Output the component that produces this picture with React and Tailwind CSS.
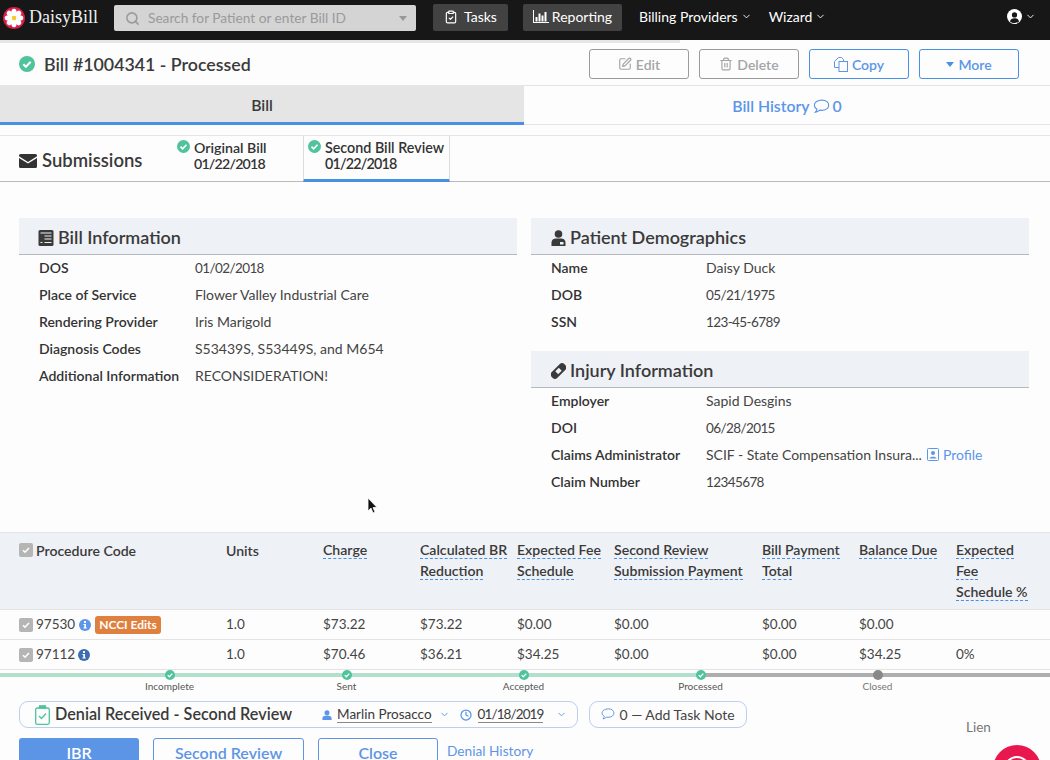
import React from "react";
import { ChevronDown, Search, ClipboardCheck, SquarePen, Trash2, Clock } from "lucide-react";

const CheckDot = ({ size = 13, className = "" }) => (
  <svg width={size} height={size} viewBox="0 0 16 16" className={`shrink-0 ${className}`}>
    <circle cx="8" cy="8" r="8" fill="#4fc39b" />
    <path d="M4.3 8.2l2.6 2.6 4.8-5" fill="none" stroke="#fff" strokeWidth="2" />
  </svg>
);

const Flower = () => (
  <svg width="22" height="22" viewBox="0 0 22 22">
    <circle cx="11" cy="11" r="11" fill="#d81f4a" />
    {[0, 45, 90, 135, 180, 225, 270, 315].map((a) => (
      <ellipse key={a} cx="11" cy="5.4" rx="2.7" ry="3.7" fill="#fff" transform={`rotate(${a} 11 11)`} />
    ))}
    <circle cx="11" cy="11" r="2.2" fill="#f6cf1d" />
  </svg>
);

const Bubble = ({ size = 15 }) => (
  <svg width={size} height={size * 0.87} viewBox="0 0 16 14" className="shrink-0">
    <path d="M8.500 1C4.400 1 1.200 3.100 1.200 5.900c0 1.500 1 2.800 2.500 3.700-.2 1-.7 2-1.500 2.900 1.500-.2 3-.9 4.100-1.900.5.100 1.100.1 1.700.1 4.100 0 6.800-2.100 6.800-4.800S12.600 1 8.500 1z" fill="none" stroke="#5b96e8" strokeWidth="1.100" />
  </svg>
);

const Box = () => (
  <span className="w-[14px] h-[14px] rounded-[2px] bg-[#b5b5b5] flex items-center justify-center shrink-0">
    <svg width="10" height="10" viewBox="0 0 10 10">
      <path d="M2 5.2l2 2 4-4.200" fill="none" stroke="#fff" strokeWidth="1.600" />
    </svg>
  </span>
);

const InfoDot = ({ color }) => (
  <svg width="12" height="12" viewBox="0 0 12 12" className="shrink-0">
    <circle cx="6" cy="6" r="6" fill={color} />
    <rect x="5" y="2" width="2" height="2" fill="#fff" />
    <path d="M4.400 5h2.600v3.400h.8v1H4.400v-1h.9V6h-.9z" fill="#fff" />
  </svg>
);

const PersonFill = ({ size = 12, color = "#5b96e8" }) => (
  <svg width={size} height={size} viewBox="0 0 12 12" className="shrink-0">
    <circle cx="6" cy="3.200" r="3" fill={color} />
    <path d="M.5 12V9.500C.5 7.500 2.500 6.500 6 6.500s5.500 1 5.500 3V12z" fill={color} />
  </svg>
);

const Row = ({ label, value, children, w, tight }) => (
  <div className="flex h-[27px] items-center text-[14px]">
    <div className={`${w} shrink-0 font-semibold text-[#333]`}>{label}</div>
    <div className={`text-[#444] flex items-center ${tight ? "pt-[1px] text-[13.5px] tracking-[-0.6px]" : ""}`}>{value}{children}</div>
  </div>
);

const SectionHead = ({ icon, title }) => (
  <div className="h-[37px] pt-[3px] bg-[#eef1f6] border-b border-[#b4b8bd] flex items-center pl-5 gap-[4px] text-[18px] font-semibold text-[#3a3a3a]">
    {icon}
    {title}
  </div>
);

const Dash = ({ children }) => <span className="border-b border-dashed border-[#4a90e2] leading-[16px] inline-block">{children}</span>;

const columns = [
  { w: "w-[97px]", lines: ["Charge"] },
  { w: "w-[97px]", lines: ["Calculated BR", "Reduction"] },
  { w: "w-[97px]", lines: ["Expected Fee", "Schedule"] },
  { w: "w-[148px]", lines: ["Second Review", "Submission Payment"] },
  { w: "w-[97px]", lines: ["Bill Payment", "Total"] },
  { w: "w-[97px]", lines: ["Balance Due"] },
  { w: "w-[90px]", lines: ["Expected", "Fee", "Schedule %"] },
];

const steps = [
  { name: "Incomplete", done: true },
  { name: "Sent", done: true },
  { name: "Accepted", done: true },
  { name: "Processed", done: true },
  { name: "Closed", done: false },
];

const BtnOutline = ({ children, blue }) => (
  <button className={`w-[100px] h-[30px] rounded-[3px] border flex items-center justify-center gap-1 text-[14px] font-semibold ${blue ? "border-[#4a90e2] text-[#5b96e8]" : "border-[#9a9a9a] text-[#a5a5a5]"}`}>
    {children}
  </button>
);

export default function App() {
  return (
    <div className="relative w-[1050px] h-[760px] overflow-hidden bg-[#fdfdfd] font-['Lato',sans-serif] text-[#333]">
      {/* top nav */}
      <div className="h-10 pt-[4px] bg-[#171717] flex items-start text-white text-[14px]">
        <div className="w-[114px] h-[27px] flex items-center pl-[3px] gap-[4px] font-['Liberation_Serif',serif] text-[18px] text-[#eee]">
          <Flower />
          <span className="pb-[1px]">DaisyBill</span>
        </div>
        <div className="w-[302px] h-[26px] mt-[1px] rounded-[2px] bg-[#d4d4d4] flex items-center pl-[11px] pr-[9px] text-[#9a9a9a] text-[13.7px]">
          <Search size={15} strokeWidth={2.5} className="mr-[8px]" />
          <span className="flex-1">Search for Patient or enter Bill ID</span>
          <span className="w-0 h-0 border-x-[4px] border-x-transparent border-t-[5px] border-t-[#999]"></span>
        </div>
        <div className="ml-[17px] w-[75px] h-[27px] pb-[2px] rounded-[2px] bg-[#424242] flex items-center justify-center gap-[6px]">
          <ClipboardCheck size={14} />
          Tasks
        </div>
        <div className="ml-[15px] w-[99px] h-[27px] pb-[2px] rounded-[2px] bg-[#424242] flex items-center justify-center gap-[3px]">
          <svg width="16" height="13" viewBox="0 0 16 13" fill="#fff">
            <path d="M0 0h1v12h15v1H0z" />
            <rect x="2.500" y="7" width="2" height="4.500" />
            <rect x="5.500" y="3.500" width="2" height="8" />
            <rect x="8.500" y="5.500" width="2" height="6" />
            <rect x="11.500" y="2" width="2" height="9.500" />
          </svg>
          Reporting
        </div>
        <div className="ml-[17px] h-[27px] pb-[2px] flex items-center gap-[3px]">Billing Providers <ChevronDown size={11} /></div>
        <div className="ml-[17px] h-[27px] pb-[2px] flex items-center gap-[3px]">Wizard <ChevronDown size={11} /></div>
        <div className="ml-auto mr-[14px] h-[27px] pb-[2px] flex items-center gap-[3px]">
          <svg width="15" height="15" viewBox="0 0 16 16">
            <circle cx="8" cy="8" r="8" fill="#fff" />
            <circle cx="8" cy="6.300" r="2.800" fill="#171717" />
            <path d="M3.200 13.200c.5-2.300 2.300-3.400 4.800-3.400s4.300 1.100 4.800 3.400A6.600 6.600 0 018 14.800a6.600 6.600 0 01-4.800-1.600z" fill="#171717" />
          </svg>
          <ChevronDown size={11} />
        </div>
      </div>
      <div className="h-[3px] w-[680px] bg-[#e6e6e6]"></div>

      {/* bill title */}
      <div className="h-[42px] flex items-center pl-[19px] pr-[31px]">
        <CheckDot size={16} />
        <div className="ml-[9px] pt-[1px] text-[17.8px] font-semibold text-[#3a3a3a]">Bill #1004341 - Processed</div>
        <div className="ml-auto flex gap-[10px]">
          <BtnOutline><SquarePen size={14} /> Edit</BtnOutline>
          <BtnOutline><Trash2 size={14} /> Delete</BtnOutline>
          <BtnOutline blue>
            <svg width="14" height="15" viewBox="0 0 14 15" fill="none" stroke="#5b96e8" strokeWidth="1">
              <path d="M4.500 .5h3l2 2v2.500M4.500 .5L.5 4.500v6h4.500" />
              <rect x="5" y="4.500" width="8.500" height="10" />
            </svg>
            Copy
          </BtnOutline>
          <BtnOutline blue>
            <span className="w-0 h-0 border-x-[4px] border-x-transparent border-t-[5px] border-t-[#4a90e2]"></span> More
          </BtnOutline>
        </div>
      </div>

      {/* tabs */}
      <div className="flex h-[40px] border-t border-[#e5e5e5] text-[15.8px] font-semibold">
        <div className="w-[524px] pt-[2px] bg-[#e5e5e5] border-b-[3px] border-[#4a90e2] flex items-center justify-center text-[#3a3a3a]">Bill</div>
        <div className="flex-1 pt-[2px] border-b border-[#e5e5e5] flex items-center justify-center gap-[3px] text-[#5b96e8]">
          Bill History <Bubble size={17} /> 0
        </div>
      </div>

      {/* submissions */}
      <div className="mt-[10px] h-[47px] flex border-y border-t-[#e5e5e5] border-b-[#b9b9b9]">
        <div className="w-[171px] pl-[19px] pt-[4px] flex items-center gap-[5px] text-[18.5px] font-semibold text-[#3a3a3a]">
          <svg width="18" height="14" viewBox="0 0 18 14" className="shrink-0">
            <path d="M1.500 0h15A1.500 1.500 0 0118 1.500v.8L9 8 0 2.300v-.8A1.500 1.500 0 011.500 0zM0 4l9 5.600L18 4v8.500a1.500 1.500 0 01-1.500 1.500h-15A1.500 1.500 0 010 12.500z" fill="#333" />
          </svg>
          Submissions
        </div>
        <div className="w-[132px] pl-[6px] pt-[4px] flex items-start gap-[4px] text-[14.2px] font-semibold leading-[16px]">
          <CheckDot size={13} />
          <div>Original Bill<br /><span className="tracking-[-0.8px]">01/22/2018</span></div>
        </div>
        <div className="w-[147px] pl-[4px] pt-[4px] flex items-start gap-[4px] text-[14.3px] font-semibold leading-[16px] border-x border-[#dcdcdc] border-b-[3px] border-b-[#4a90e2] h-[46px]">
          <CheckDot size={13} />
          <div>Second Bill Review<br /><span className="tracking-[-0.8px]">01/22/2018</span></div>
        </div>
      </div>

      {/* info panels */}
      <div className="mt-[36px] h-[314px] px-[19px] flex gap-[14px]">
        <div className="w-[498px]">
          <SectionHead
            title="Bill Information"
            icon={
              <svg width="16" height="16" viewBox="0 0 15 16" className="-ml-[1px]">
                <rect width="15" height="16" rx="1.500" fill="#3a3a3a" />
                <path d="M2 3h11M6 6h7M6 9h7M2 12.500h2M6 12.500h7" stroke="#eef1f6" strokeWidth="1.200" />
              </svg>
            }
          />
          <div className="pl-5 -mt-[1px]">
            <Row w="w-[156px]" tight label="DOS" value="01/02/2018" />
            <Row w="w-[156px]" label="Place of Service" value="Flower Valley Industrial Care" />
            <Row w="w-[156px]" label="Rendering Provider" value="Iris Marigold" />
            <Row w="w-[156px]" label="Diagnosis Codes" value="S53439S, S53449S, and M654" />
            <Row w="w-[156px]" label="Additional Information" value="RECONSIDERATION!" />
          </div>
        </div>
        <div className="w-[498px]">
          <SectionHead
            title="Patient Demographics"
            icon={
              <svg width="15" height="16" viewBox="0 0 15 16">
                <circle cx="7.500" cy="4" r="3.800" fill="#3a3a3a" />
                <path d="M.5 16v-3.500C.5 10 2.500 8.500 5 8.500h5c2.500 0 4.500 1.500 4.500 4V16z" fill="#3a3a3a" />
                <rect x="9" y="12" width="3.500" height="2.500" fill="#eef1f6" />
              </svg>
            }
          />
          <div className="pl-5 -mt-[1px] pb-[16px]">
            <Row w="w-[155px]" label="Name" value="Daisy Duck" />
            <Row w="w-[155px]" tight label="DOB" value="05/21/1975" />
            <Row w="w-[155px]" tight label="SSN" value="123-45-6789" />
          </div>
          <SectionHead
            title="Injury Information"
            icon={
              <svg width="15" height="16" viewBox="0 0 15 16">
                <g transform="rotate(45 7.500 8)">
                  <rect x="3.500" y="-1" width="8" height="18" rx="3.500" fill="#3a3a3a" />
                  <rect x="5.500" y="5.500" width="4" height="5" fill="#eef1f6" />
                </g>
              </svg>
            }
          />
          <div className="pl-5 -mt-[1px]">
            <Row w="w-[155px]" label="Employer" value="Sapid Desgins" />
            <Row w="w-[155px]" tight label="DOI" value="06/28/2015" />
            <Row w="w-[155px]" label="Claims Administrator" value="SCIF - State Compensation Insura...">
              <span className="ml-[5px] flex items-center gap-[4px] text-[#5b96e8]">
                <svg width="12" height="13" viewBox="0 0 12 13">
                  <rect x=".5" y=".5" width="11" height="12" rx="1" fill="none" stroke="#5b96e8" />
                  <circle cx="6" cy="5" r="2" fill="#5b96e8" />
                  <path d="M2.500 10.500c0-2.500 7-2.500 7 0z" fill="#5b96e8" />
                </svg>
                Profile
              </span>
            </Row>
            <Row w="w-[155px]" tight label="Claim Number" value="12345678" />
          </div>
        </div>
      </div>

      {/* procedure table */}
      <div className="h-[78px] bg-[#eef1f6] border-y border-[#e3e3e3] flex pt-[9px] pl-[19px] text-[14.1px] font-semibold text-[#3a3a3a]">
        <div className="w-[207px] flex items-start gap-[3px] leading-[17px]"><span className="mt-[1px]"><Box /></span>Procedure Code</div>
        <div className="w-[97px] leading-[17px]">Units</div>
        {columns.map((c) => (
          <div key={c.lines[0]} className={`${c.w} flex flex-col items-start gap-[4px]`}>
            {c.lines.map((l) => <Dash key={l}>{l}</Dash>)}
          </div>
        ))}
      </div>
      <div className="h-[30px] border-b border-[#e3e3e3] flex items-center pl-[19px] text-[13.5px] text-[#444]">
        <div className="w-[207px] flex items-center gap-[3px]">
          <Box />97530
          <span className="ml-[1px]"><InfoDot color="#5b96e8" /></span>
          <span className="ml-[1px] h-[18px] px-[4px] rounded-[3px] bg-[#e0803e] text-white text-[12px] font-bold flex items-center">NCCI Edits</span>
        </div>
        <div className="w-[97px]">1.0</div>
        <div className="w-[97px]">$73.22</div>
        <div className="w-[97px]">$73.22</div>
        <div className="w-[97px]">$0.00</div>
        <div className="w-[148px]">$0.00</div>
        <div className="w-[97px]">$0.00</div>
        <div className="w-[97px]">$0.00</div>
      </div>
      <div className="h-[30px] border-b border-[#e3e3e3] flex items-center pl-[19px] text-[13.5px] text-[#444]">
        <div className="w-[207px] flex items-center gap-[3px]"><Box />97112<InfoDot color="#3d6cb0" /></div>
        <div className="w-[97px]">1.0</div>
        <div className="w-[97px]">$70.46</div>
        <div className="w-[97px]">$36.21</div>
        <div className="w-[97px]">$34.25</div>
        <div className="w-[148px]">$0.00</div>
        <div className="w-[97px]">$0.00</div>
        <div className="w-[97px]">$34.25</div>
        <div>0%</div>
      </div>

      {/* status timeline */}
      <div className="relative h-[25px]">
        <div className="absolute top-[3px] left-0 w-[700px] h-[4px] bg-[#b2e0cd]"></div>
        <div className="absolute top-[3px] left-[700px] right-0 h-[4px] bg-[#aeaeae]"></div>
        <div className="absolute left-[81px] top-0 w-[885px] grid grid-cols-5">
          {steps.map((s) => (
            <div key={s.name} className={`flex flex-col items-center text-[10px] leading-[11px] ${s.done ? "text-[#555]" : "text-[#777]"}`}>
              {s.done ? <CheckDot size={10} /> : <span className="w-[10px] h-[10px] rounded-full bg-[#888]"></span>}
              <span className="mt-[1px]">{s.name}</span>
            </div>
          ))}
        </div>
      </div>

      {/* task bar */}
      <div className="relative px-[19px] flex gap-[11px] h-[29px] items-center mt-[5px]">
        <div className="w-[559px] h-[27px] rounded-[9px] border border-[#bccfee] flex items-center pl-[15px] text-[#3a3a3a]">
          <svg width="15" height="20" viewBox="0 0 15 20" fill="none" stroke="#4fc39b" strokeWidth="1.300" className="mr-[5px] shrink-0">
            <rect x=".7" y="3" width="13.600" height="16.300" rx="1.500" />
            <path d="M4.500 3V.8h6V3z" fill="#4fc39b" />
            <path d="M4 11l2.500 2.500L11 8.500" />
          </svg>
          <span className="text-[16.2px] font-semibold">Denial Received - Second Review</span>
          <span className="ml-[30px] mr-[5px]"><PersonFill size={10} /></span>
          <span className="text-[13.5px] border-b border-[#888] leading-[15px]">Marlin Prosacco</span>
          <ChevronDown size={11} className="ml-[7px] text-[#5b96e8]" />
          <Clock size={12} strokeWidth={2.5} className="ml-[10px] mr-[6px] text-[#5b96e8]" />
          <span className="text-[13.5px] tracking-[-0.9px] border-b border-[#888] leading-[15px]">01/18/2019</span>
          <ChevronDown size={11} className="ml-auto mr-[10px] text-[#5b96e8]" />
        </div>
        <div className="w-[158px] h-[27px] rounded-[9px] border border-[#bccfee] flex items-center justify-center gap-[4px] text-[14px] text-[#444]">
          <Bubble size={14} />
          0 — Add Task Note
        </div>
        <div className="absolute left-[966px] top-[17px] text-[13.5px] text-[#777]">Lien</div>
      </div>

      {/* actions */}
      <div className="relative mt-[9px] px-[19px] flex items-start text-[16px] font-semibold">
        <div className="w-[120px] h-[30px] rounded-[3px] bg-[#5d95e6] text-white flex items-center justify-center">IBR</div>
        <div className="ml-[14px] w-[151px] h-[30px] rounded-[3px] border border-[#5d95e6] text-[#5d95e6] flex items-center justify-center">Second Review</div>
        <div className="ml-[14px] w-[120px] h-[30px] rounded-[3px] border border-[#5d95e6] text-[#5d95e6] flex items-center justify-center">Close</div>
        <div className="ml-[9px] text-[13.7px] font-normal text-[#5d95e6] pt-[3px]">Denial History</div>
        <svg width="48" height="48" viewBox="0 0 48 48" className="absolute left-[993px] top-[7px]">
          <circle cx="24" cy="24" r="24" fill="#e8184f" />
          <circle cx="24" cy="24" r="12" fill="none" stroke="#fff" strokeWidth="2" />
          <circle cx="24" cy="24" r="7" fill="none" stroke="#fff" strokeWidth="2" />
        </svg>
      </div>

      {/* mouse cursor from the recording */}
      <svg width="12" height="18" viewBox="0 0 12 18" className="absolute left-[367px] top-[497px]">
        <path d="M1 1v13l3-3 2 5 2-1-2-4.500h4z" fill="#111" stroke="#fff" strokeWidth=".8" />
      </svg>
    </div>
  );
}
